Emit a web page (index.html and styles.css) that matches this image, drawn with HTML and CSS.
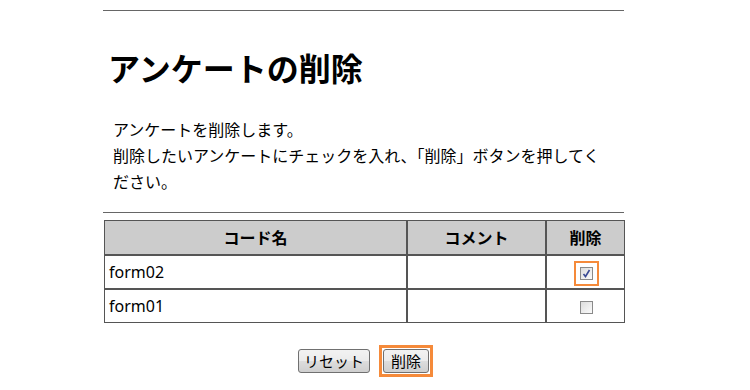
FILE: index.html
```html
<!DOCTYPE html>
<html>
<head>
  <title>アンケートの削除</title>
  <link rel="stylesheet" href="styles.css">
</head>
<body>

  <div class="page">
    <hr>
    <h1>アンケートの削除</h1>
    <p class="lead">アンケートを削除します。<br>削除したいアンケートにチェックを入れ、「削除」ボタンを押してください。</p>
    <hr>

    <form>
      <table class="list">
        <tr>
          <th class="col-code">コード名</th>
          <th class="col-comment">コメント</th>
          <th class="col-del">削除</th>
        </tr>
        <tr>
          <td>form02</td>
          <td></td>
          <td class="col-del">
            <span class="check checked focus">
              <svg width="11" height="11" viewBox="0 0 11 11"><path d="M2.5 6 L4.5 8.5 L8.5 2" fill="none" stroke="#3a4a94" stroke-width="1.6"/></svg>
            </span>
          </td>
        </tr>
        <tr>
          <td>form01</td>
          <td></td>
          <td class="col-del"><span class="check"></span></td>
        </tr>
      </table>

      <div class="buttons">
        <button type="reset" class="btn btn-reset">リセット</button>
        <span class="focus-ring"><button type="submit" class="btn">削除</button></span>
      </div>
    </form>
  </div>

</body>
</html>
```

FILE: styles.css
```css
* {
  box-sizing: border-box;
}

body {
  margin: 0;
  background: #fff;
  color: #000;
  font-family: "Noto Sans", "Noto Sans CJK JP", sans-serif;
  font-size: 16px;
}

.page {
  width: 521px;
  margin-left: 103px;
  padding-top: 10px;
}

hr {
  border: none;
  border-top: 1px solid #666;
  margin: 0;
}

h1 {
  font-size: 32px;
  font-weight: bold;
  margin: 34px 0 0 5px;
  line-height: 48px;
}

.lead {
  margin: 24px 10px 17px 10px;
  line-height: 26px;
}

.list {
  margin-top: 7px;
  width: 521px;
  margin-left: 1px;
  border-collapse: separate;
  border-spacing: 0;
}

.list th,
.list td {
  border: 1px solid #555;
  height: 34px;
  padding: 0 4px;
  line-height: 20px;
}

.list th {
  background: #ccc;
  font-weight: bold;
  text-align: center;
  height: 35px;
}

.col-code {
  width: 303px;
}

.col-comment {
  width: 139px;
}

.list .col-del {
  text-align: center;
}

.check {
  display: inline-block;
  position: relative;
  width: 13px;
  height: 13px;
  border: 1px solid #8a8a8a;
  background: linear-gradient(135deg, #dcdcdc, #fbfbfb);
  vertical-align: middle;
  margin-left: 2px;
}

.check svg {
  position: absolute;
  left: 0;
  top: 0;
}

.check.focus {
  outline: 2px solid #f58a3a;
  outline-offset: 4px;
}

.buttons {
  margin-top: 26px;
  text-align: center;
  font-size: 0;
  padding-left: 4px;
}

.btn {
  font-family: "Noto Sans CJK JP", sans-serif;
  font-size: 15px;
  height: 24px;
  padding: 0 7px;
  margin: 0;
  border: 1px solid #707070;
  border-radius: 3px;
  background: linear-gradient(#f2f2f2 0%, #ebebeb 50%, #dddddd 51%, #cfcfcf 100%);
  color: #000;
  line-height: 20px;
  vertical-align: top;
}

.btn-reset {
  padding: 0 5px;
}

.focus-ring {
  display: inline-block;
  margin-left: 9px;
  margin-top: -4px;
  padding: 1px;
  border: 3px solid #f58a3a;
  vertical-align: top;
}
```
